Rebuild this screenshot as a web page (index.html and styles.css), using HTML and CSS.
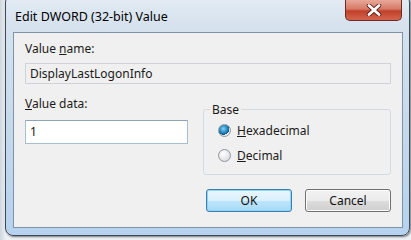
FILE: index.html
```html
<!DOCTYPE html>
<html>

<head>
  <title>Edit DWORD (32-bit) Value</title>
  <link rel="stylesheet" href="styles.css">
</head>

<body>
  <div class="desktop">
    <div class="window">
      <div class="titlebar">
        <span class="title">Edit DWORD (32-bit) Value</span>
        <button class="close">
          <svg width="16" height="12" viewBox="0 0 16 12">
            <path d="M3 1.5 L13 10.5 M13 1.5 L3 10.5" stroke="#5a1a14" stroke-width="4.4" stroke-linecap="round"/>
            <path d="M3 1.5 L13 10.5 M13 1.5 L3 10.5" stroke="#ffffff" stroke-width="2.8" stroke-linecap="round"/>
          </svg>
        </button>
      </div>
      <div class="client">
        <label class="label">Value <u>n</u>ame:</label>
        <div class="field readonly">DisplayLastLogonInfo</div>
        <div class="row">
          <div class="data">
            <label class="label"><u>V</u>alue data:</label>
            <div class="field input">1</div>
          </div>
          <fieldset class="base">
            <legend>Base</legend>
            <div class="radio"><span class="dot checked"></span><span><u>H</u>exadecimal</span></div>
            <div class="radio"><span class="dot"></span><span><u>D</u>ecimal</span></div>
          </fieldset>
        </div>
        <div class="buttons">
          <button class="btn default">OK</button>
          <button class="btn">Cancel</button>
        </div>
      </div>
    </div>
  </div>
</body>

</html>
```

FILE: styles.css
```css
html, body {
  margin: 0;
  padding: 0;
  width: 100%;
  height: 100%;
  overflow: hidden;
  font-family: "Noto Sans", "DejaVu Sans", sans-serif;
  font-size: 12px;
  color: #1a1a1a;
}
.desktop {
  width: 411px;
  height: 240px;
  background: linear-gradient(90deg, #cfd6de 0, #eef1f4 6px, #eef1f4 100%);
  overflow: hidden;
}
.window {
  margin: -6px 0 0 5px;
  width: 405px;
  height: 242px;
  box-sizing: border-box;
  border: 1px solid #3d4a58;
  border-radius: 8px;
  background: linear-gradient(180deg, #e4ecf4 0, #d6e2ee 30px, #c4d8ec 60%, #b6d2ee 100%);
  box-shadow: 1px 1px 2px rgba(0, 0, 0, 0.5);
  display: flex;
  flex-direction: column;
  padding: 0 6px 7px 7px;
}
.titlebar {
  height: 37px;
  display: flex;
  align-items: flex-start;
  justify-content: space-between;
  flex-shrink: 0;
}
.title {
  margin: 13px 0 0 2px;
  font-size: 12.5px;
  color: #000;
}
.close {
  margin: 5px 1px 0 0;
  width: 57px;
  height: 21px;
  border: 1px solid #6e2a22;
  border-top: none;
  border-radius: 0 0 5px 5px;
  background: linear-gradient(180deg, #e9a89a 0, #d67a66 45%, #c2402a 55%, #d4644c 100%);
  display: flex;
  align-items: center;
  justify-content: center;
  padding: 0;
}
.client {
  flex: 1;
  border: 1px solid #7f93a8;
  background: #f0f0f0;
  padding: 8px 11px 15px 11px;
  display: flex;
  flex-direction: column;
}
.label {
  display: block;
  height: 16px;
  line-height: 16px;
}
.field {
  box-sizing: border-box;
  height: 21px;
  line-height: 19px;
  padding: 0 4px;
  border: 1px solid #cfd2d6;
}
.readonly {
  margin-top: 6px;
  background: #f0f0f0;
}
.row {
  display: flex;
  margin-top: 12px;
}
.data {
  width: 163px;
}
.data .label {
  margin-bottom: 8px;
}
.input {
  height: 24px;
  line-height: 22px;
  background: #fff;
  border: 1px solid #a9bdd3;
  border-top-color: #8ea4bd;
}
.base {
  margin: 5px 0 0 15px;
  padding: 0 0 4px 14px;
  width: 188px;
  height: 74px;
  box-sizing: border-box;
  border: 1px solid #d5dadf;
  border-radius: 3px;
}
.base legend {
  padding: 0 2px;
  margin-left: -8px;
}
.radio {
  display: flex;
  align-items: center;
  gap: 6px;
  height: 25px;
}
.dot {
  width: 11px;
  height: 11px;
  border-radius: 50%;
  border: 1px solid #8f969e;
  background: radial-gradient(circle at 40% 35%, #ffffff 0, #e2e4e6 60%, #cfd3d6 100%);
}
.dot.checked {
  background: radial-gradient(circle at 40% 35%, #7fd0f4 0, #1e7fb8 45%, #0d4f7c 60%, #e8eef2 62%, #e8eef2 100%);
}
.buttons {
  display: flex;
  justify-content: flex-end;
  gap: 13px;
  margin-top: auto;
}
.btn {
  width: 86px;
  height: 23px;
  font-family: inherit;
  font-size: 12px;
  color: #111;
  border: 1px solid #707070;
  border-radius: 3px;
  background: linear-gradient(180deg, #f2f2f2 0, #ebebeb 50%, #dddddd 51%, #cfcfcf 100%);
  box-shadow: inset 0 0 0 1px #fcfcfc;
  padding: 0;
}
.btn.default {
  border-color: #3c7fb1;
  background: linear-gradient(180deg, #eaf6fd 0, #d9f0fc 50%, #bee6fd 51%, #a7d9f5 100%);
  box-shadow: inset 0 0 0 1px #8fd6f5;
}
```
